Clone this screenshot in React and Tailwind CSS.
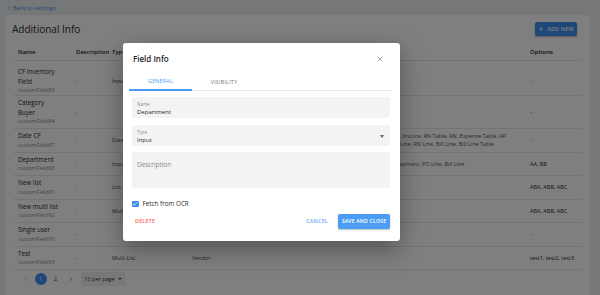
import { X, Plus, ChevronLeft, ChevronRight, Check } from 'lucide-react'

const rows = [
  { name: ['CF Inventory', 'Field'], key: 'customField89', type: 'Input', applies: [], options: '-' },
  { name: ['Category', 'Buyer'], key: 'customField84', type: '', applies: [], options: '-' },
  {
    name: ['Date CF'], key: 'customField87', type: 'Date',
    applies: [
      'Bill, Bill Table, Expense, Payment, Journal Entry, Purchase Order, Vendors, Credits, Invoice, RN Table, RN, Expense Table, AP',
      'Invoice Line, Expense Line, Payment Line, Journal Entry Line, Credit Note Line, AP Line, RN Line, Bill Line, Bill Line Table',
    ],
    options: '-',
  },
  {
    name: ['Department'], key: 'customField88', type: 'Input',
    applies: ['Bill, Invoice, Invoice Line, Expense, Expense Line, Journal Entry, Purchase Order, Payment, PO Line, Bill Line'],
    options: 'AA, BB',
  },
  { name: ['New list'], key: 'customField91', type: 'List', applies: [], options: 'ABA, ABB, ABC' },
  { name: ['New multi list'], key: 'customField92', type: 'Multi List', applies: [], options: 'ABA, ABB, ABC' },
  { name: ['Single user'], key: 'customField90', type: '', applies: [], options: '-' },
  { name: ['Test'], key: 'customField93', type: 'Multi List', applies: ['Vendor'], options: 'test1, test2, test3' },
]

const cols = 'grid grid-cols-[58px_36px_80px_338px_58px]'

function Row({ r, first }) {
  return (
    <div className={`${cols} border-b border-[#e6e6e6] ${first ? 'pt-[6px]' : 'py-[2px]'}`}>
      <div className="px-[5px]">
        {r.name.map((n) => (
          <div key={n} className="text-[6.3px] leading-[9.5px] text-[#2a2a2a] whitespace-nowrap">{n}</div>
        ))}
        <div className="text-[5.4px] leading-[9px] text-[#8a8a8a]">{r.key}</div>
      </div>
      <div className="px-[5px] flex items-center text-[5.5px] text-[#555]">-</div>
      <div className="px-[5px] flex items-center text-[5.5px] text-[#444]">{r.type}</div>
      <div className="px-[5px] flex flex-col justify-center text-[5.5px] leading-[8px] text-[#555]">
        {r.applies.map((a) => (
          <div key={a} className="whitespace-nowrap">{a}</div>
        ))}
      </div>
      <div className="px-[5px] flex items-center text-[5.5px] text-[#2a2a2a] whitespace-nowrap">{r.options}</div>
    </div>
  )
}

function Field({ label, value, caret }) {
  return (
    <div className="relative h-[21px] bg-[#f3f3f3] rounded-[2px] px-[5px] pt-[4px]">
      <div className="text-[4.5px] leading-[6px] text-[#8c8c8c]">{label}</div>
      <div className="text-[6px] leading-[8px] mt-[0.5px] text-[#2a2a2a]">{value}</div>
      {caret && (
        <div className="absolute right-[6px] top-[9.5px] w-0 h-0 border-l-[2.5px] border-r-[2.5px] border-t-[3px] border-l-transparent border-r-transparent border-t-[#666]" />
      )}
    </div>
  )
}

export default function App() {
  return (
    <div className="relative w-[600px] h-[295px] overflow-hidden bg-[#eceef0] font-['Open_Sans',sans-serif] text-[#333]">
      {/* back link */}
      <div className="h-[16px] pl-[6px] flex items-center gap-[1px] text-[5.8px] text-[#3f8ff2]">
        <ChevronLeft size={6} strokeWidth={2} />
        <span>Back to settings</span>
      </div>

      {/* card */}
      <div className="ml-[5px] mr-[10px] h-[290px] -mt-[1px] bg-white rounded-[3px] px-[7px]">
        <div className="pt-[7px] pr-[6px] flex items-center justify-between h-[21px]">
          <h1 className="text-[10px] leading-[14px] text-[#2b2b2b]">Additional Info</h1>
          <button className="h-[14px] w-[42px] rounded-[2px] bg-[#3f8ff2] text-white text-[5.4px] font-semibold tracking-[0.2px] flex items-center justify-center gap-[3px] shadow-[0_1px_2px_rgba(0,0,0,0.3)]">
            <Plus size={6} strokeWidth={2.5} />
            ADD NEW
          </button>
        </div>

        <div className="mx-[1px] mt-[8px]">
          <div className={`${cols} h-[17px] items-center border-b border-[#e6e6e6] text-[6px] font-semibold text-[#222]`}>
            <div className="px-[5px]">Name</div>
            <div className="px-[5px]">Description</div>
            <div className="px-[5px]">Type</div>
            <div className="px-[5px]">Applies to</div>
            <div className="px-[5px]">Options</div>
          </div>
          {rows.map((r, i) => (
            <Row key={r.key} r={r} first={i === 0} />
          ))}

          {/* pagination */}
          <div className="mt-[2px] h-[14px] pl-[5px] flex items-center text-[6px] text-[#333]">
            <div className="w-[15px] flex justify-center text-[#aaa]"><ChevronLeft size={6} strokeWidth={2} /></div>
            <div className="w-[15px] flex justify-center">
              <div className="w-[12px] h-[12px] rounded-full bg-[#3f8ff2] text-white flex items-center justify-center">1</div>
            </div>
            <div className="w-[15px] flex justify-center">2</div>
            <div className="w-[15px] flex justify-center text-[#333]"><ChevronRight size={6} strokeWidth={2} /></div>
            <div className="ml-[3px] h-[14px] w-[44px] rounded-[2px] bg-[#f0f0f0] flex items-center justify-center gap-[3px] text-[5.5px]">
              10 per page
              <div className="w-0 h-0 border-l-[2px] border-r-[2px] border-t-[2.5px] border-l-transparent border-r-transparent border-t-[#555]" />
            </div>
          </div>
        </div>
      </div>

      {/* overlay + modal */}
      <div className="absolute inset-0 bg-black/50">
        <div className="absolute left-[123px] top-[43px] w-[277px] h-[198px] bg-white rounded-[3px] shadow-[0_8px_24px_rgba(0,0,0,0.35)]">
          <div className="pt-[10px] pl-[10px] pr-[16px] h-[22px] flex items-center justify-between">
            <div className="text-[8px] font-semibold text-[#222] leading-[12px]">Field Info</div>
            <X size={8} strokeWidth={1.6} className="text-[#555]" />
          </div>

          <div className="mt-[8px] ml-[6px] mr-[7px] border-b border-[#e8e8e8] flex">
            <div className="w-[63px] h-[18px] flex items-center justify-center border-b-[2px] border-[#4b9cf5] -mb-[1px] text-[5.4px] text-[#4b9cf5] tracking-[0.2px]">GENERAL</div>
            <div className="w-[64px] h-[18px] flex items-center justify-center -mb-[1px] text-[5.4px] text-[#777] tracking-[0.2px]">VISIBILITY</div>
          </div>

          <div className="ml-[9px] mr-[10px] mt-[6px]">
            <Field label="Name" value="Department" />
            <div className="mt-[7px]">
              <Field label="Type" value="Input" caret />
            </div>
            <div className="mt-[6px] h-[36px] bg-[#f3f3f3] rounded-[2px] px-[5px] pt-[8px] text-[6.4px] leading-[9px] text-[#888]">
              Description
            </div>
          </div>

          <div className="mt-[11px] ml-[9px] h-[10px] flex items-center gap-[4px]">
            <div className="w-[6.5px] h-[6.5px] rounded-[1px] bg-[#3f8ff2] flex items-center justify-center text-white">
              <Check size={6} strokeWidth={3} />
            </div>
            <span className="text-[6.3px] text-[#2a2a2a]">Fetch from OCR</span>
          </div>

          <div className="mt-[5px] pl-[12px] pr-[10px] flex items-center">
            <span className="text-[5.4px] font-semibold text-[#f4645c] tracking-[0.2px]">DELETE</span>
            <span className="ml-auto text-[5.4px] font-semibold text-[#6aaaf5] tracking-[0.2px]">CANCEL</span>
            <button className="ml-[10px] h-[15px] w-[52px] rounded-[2px] bg-[#4b9cf5] text-white text-[5.3px] font-semibold tracking-[0.1px] shadow-[0_1px_2px_rgba(0,0,0,0.25)]">
              SAVE AND CLOSE
            </button>
          </div>
        </div>
      </div>
    </div>
  )
}
